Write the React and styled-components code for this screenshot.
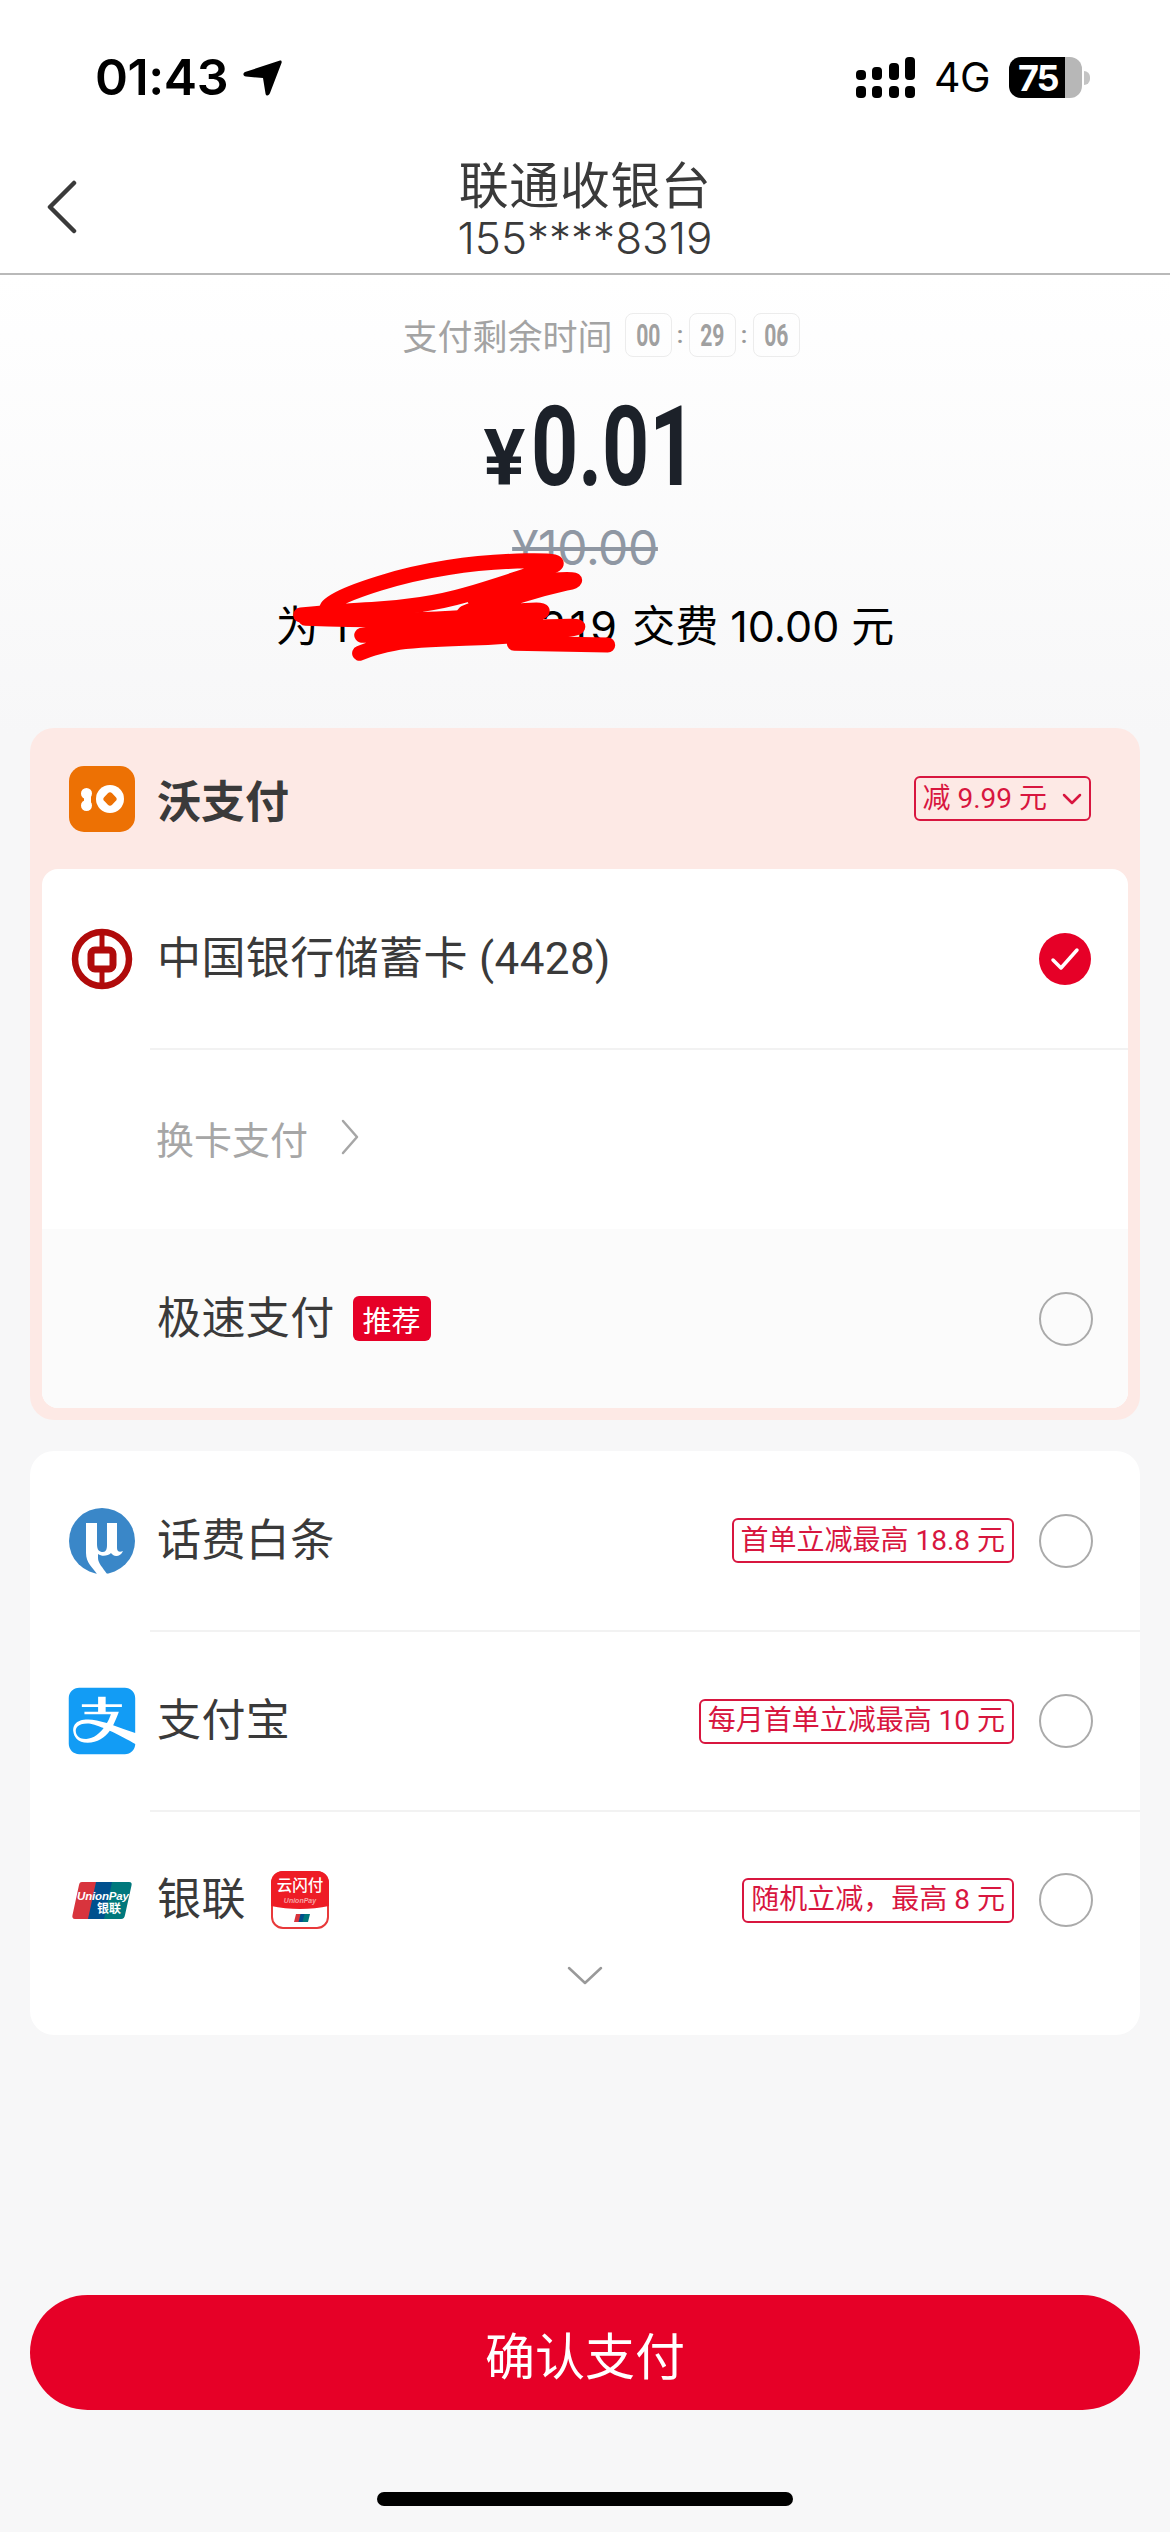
import React from "react";
import styled, { createGlobalStyle } from "styled-components";
import { FaAlipay } from "react-icons/fa";

const Global = createGlobalStyle`
  html, body { margin: 0; padding: 0; background: #f7f7f8; }
  * { box-sizing: border-box; }
`;
const FONT = `Roboto, "Noto Sans CJK SC", sans-serif`;
const UI = `Inter, "Noto Sans CJK SC", sans-serif`;
const RED = "#e60027";
const TAG = "#d8163f";

const Page = styled.div`
  width: 1170px; height: 2532px; overflow: hidden; display: flex; flex-direction: column; position: relative;
  font-family: ${FONT}; background: #f7f7f8; color: #3a3a3a;
`;
const StatusBar = styled.div`
  height: 140px; background: #fff; display: flex; justify-content: space-between; align-items: flex-start;
  padding: 57px 80px 0 95px; color: #000; font-family: ${UI};
`;
const TimeGroup = styled.div`display: flex; align-items: center; gap: 15px; height: 41px;`;
const Clock = styled.span`font-size: 50px; font-weight: 600; line-height: 41px; letter-spacing: -.4px;`;
const StatusRight = styled.div`display: flex; align-items: center; height: 41px;`;
const Network = styled.span`font-size: 41px; font-weight: 400; margin: 0 19px 0 19px; line-height: 41px; letter-spacing: -.5px;`;
const Battery = styled.div`
  width: 73px; height: 41px; border-radius: 12px; background: linear-gradient(90deg, #000 0 56px, #b7b7b7 56px);
  display: flex; align-items: center; padding-left: 9px; color: #fff; font-size: 36px; font-weight: 700; letter-spacing: -2px;
`;
const BatteryNub = styled.i`width: 6px; height: 14px; background: #c4c4c4; border-radius: 0 7px 7px 0; margin-left: 2px;`;

const NavBar = styled.div`
  height: 135px; background: #fff; border-bottom: 2px solid #b9b9b9; display: flex; flex-direction: column;
  align-items: center; position: relative; padding-top: 16px; color: #3a3a3a;
`;
const BackIcon = styled.svg`position: absolute; left: 46px; top: 40px;`;
const NavTitle = styled.div`font-size: 50px; line-height: 62px; letter-spacing: .5px;`;
const NavSub = styled.div`font-size: 44px; line-height: 50px; font-weight: 300; font-family: ${UI}; margin-top: -5px;`;

const Main = styled.main`
  flex: 1; display: flex; flex-direction: column; position: relative;
  background: linear-gradient(180deg, #fff 0, #f7f7f8 460px);
  padding: 0 30px 122px;
`;
const TimerRow = styled.div`
  display: flex; justify-content: center; align-items: center; margin-top: 38px; height: 44px; color: #a3a3a3; font-size: 35px; padding-left: 32px;
`;
const TimerLabel = styled.span`margin: 0 12px 2px 0;`;
const TimerBox = styled.span`
  width: 47px; height: 44px; border: 1px solid #ececec; border-radius: 8px; display: flex; align-items: center; justify-content: center;
`;
const TimerDigits = styled.span`
  display: inline-block; font: 700 32px Roboto, sans-serif; transform: scaleX(.66); color: #a0a0a0;
`;
const TimerColon = styled.span`width: 17px; text-align: center; font-size: 24px; color: #999; font-weight: 600;`;

const AmountRow = styled.div`
  display: flex; justify-content: center; align-items: baseline; height: 100px; margin-top: 40px; color: #1c2129;
`;
const Yen = styled.span`font: 700 78px Roboto, sans-serif; margin-right: 6px;`;
const AmountValue = styled.span`
  display: inline-block; width: 155px; font: 700 112px/100px Roboto, sans-serif; transform: scaleX(.735); transform-origin: left center; white-space: nowrap;
`;
const OldPrice = styled.div`
  height: 50px; margin-top: 26px; text-align: center; font-size: 48px; line-height: 50px; color: #8f97a3; font-weight: 400;
  text-decoration: line-through; text-decoration-thickness: 4px; font-family: Inter, sans-serif; letter-spacing: -.4px;
`;
const Description = styled.div`
  height: 50px; margin-top: 28px; display: flex; justify-content: center; align-items: center; gap: 12px; color: #000; font-size: 43px; line-height: 50px; white-space: nowrap; font-family: ${UI};
`;
const MaskedPhone = styled.span`letter-spacing: 3.3px;`;
const Scribble = styled.svg`position: absolute; left: 0; top: 0; pointer-events: none;`;

const WoCard = styled.section`
  margin-top: 77px; height: 692px; background: #fde9e5; border-radius: 24px; padding: 0 12px 12px; display: flex; flex-direction: column;
`;
const WoHeader = styled.header`
  height: 141px; flex: none; display: flex; align-items: center; padding: 0 37px 0 27px;
`;
const WoTitle = styled.h2`margin: 0 0 0 22px; font-size: 44px; font-weight: 700; color: #3a3a3a; flex: 1;`;
const Inner = styled.div`flex: 1; background: #fff; border-radius: 16px; overflow: hidden; display: flex; flex-direction: column;`;
const Row = styled.div`
  height: ${p => p.$h || 179}px; flex: none; display: flex; align-items: center;
  padding: 0 ${p => p.$right}px 0 ${p => p.$left}px; background: ${p => p.$tint ? "#fbfbfb" : "transparent"};
`;
const IconSlot = styled.div`width: 66px; flex: none; display: flex; justify-content: center; align-items: center; margin-right: 22px;`;
const Label = styled.span`font-size: 44px; line-height: 56px; color: #3a3a3a; white-space: nowrap; letter-spacing: .4px;`;
const Spacer = styled.div`flex: 1;`;
const Divider = styled.div`height: 2px; flex: none; background: #f2f2f2; margin-left: ${p => p.$left}px;`;
const SwitchLink = styled.div`
  height: 179px; flex: none; display: flex; align-items: center; padding: 0 0 5px 114px; gap: 33px; font-size: 38px; color: #a6a6a6;
`;
const RecommendTag = styled.span`
  margin-left: 18px; width: 78px; height: 45px; border-radius: 6px; background: ${RED}; color: #fff; font-size: 29px;
  display: flex; align-items: center; justify-content: center;
`;
const OfferTag = styled.span`
  height: 45px; border: 2px solid ${TAG}; border-radius: 6px; color: ${TAG}; font-size: 28px; line-height: 40px; padding: 0 7px; white-space: nowrap;
  display: inline-flex; align-items: center; gap: ${p => p.$gap || 0}px;
`;
const Radio = styled.span`
  width: 54px; height: 54px; flex: none; border-radius: 50%; border: 2px solid #aaa; margin-left: 25px;
`;
const Checked = styled.span`
  width: 52px; height: 52px; flex: none; border-radius: 50%; background: ${RED}; display: flex; align-items: center; justify-content: center;
`;
const MethodCard = styled.section`
  margin-top: 31px; height: 584px; background: #fff; border-radius: 24px; overflow: hidden; display: flex; flex-direction: column;
`;
const Expand = styled.div`
  height: 75px; margin-top: -26px; flex: none; display: flex; justify-content: center; padding-top: 4px;
`;
const ConfirmButton = styled.button`
  margin-top: auto; height: 115px; border: 0; border-radius: 58px; background: ${RED}; color: #fff; font: 400 50px ${FONT}; flex: none; width: 100%;
`;
const HomeBar = styled.div`
  width: 416px; height: 14px; border-radius: 7px; background: #000; position: absolute; bottom: 26px; left: 377px;
`;
const CloudWrap = styled.span`display: flex; margin-left: 25px;`;
const AlipaySlot = styled.span`display: flex; width: 66px; height: 66px; align-items: center; justify-content: center;`;
const AlipayLogo = styled(FaAlipay)`display: block; flex: none; color: #129cf5; width: 76px; height: 76px;`;

const Arrow = () => (
  <svg width="39" height="37" viewBox="0 0 39 37"><path d="M37 1.500 C38.500 1 39 2.500 38.500 4 L27 34 C26 37 23 37.500 22.500 34.500 L20 19 L3 17.500 C0 17 -.5 14.500 2 13 Z" fill="#000" /></svg>
);
const Signal = () => (
  <svg width="59" height="41" viewBox="0 0 59 41" fill="#000">
    <rect x="0" y="13" width="10" height="10" rx="4" /><rect x="0" y="29" width="10" height="12" rx="4" />
    <rect x="16" y="10" width="10" height="13" rx="4" /><rect x="16" y="29" width="10" height="12" rx="4" />
    <rect x="33" y="6" width="10" height="17" rx="4" /><rect x="33" y="29" width="10" height="12" rx="4" />
    <rect x="49" y="0" width="10" height="23" rx="4" /><rect x="49" y="29" width="10" height="12" rx="4" />
  </svg>
);
const WoLogo = () => (
  <svg width="66" height="66" viewBox="0 0 66 66">
    <rect width="66" height="66" rx="15" fill="#ed7104" />
    <circle cx="41" cy="33" r="14" fill="#fff" />
    <rect x="35.500" y="27.500" width="11" height="11" rx="3" transform="rotate(45 41 33)" fill="#ed7104" />
    <circle cx="17.500" cy="27.500" r="5.500" fill="#fff" /><circle cx="17.500" cy="39.500" r="5.500" fill="#fff" />
    <rect x="15" y="28" width="7" height="11" fill="#fff" />
  </svg>
);
const BocLogo = () => (
  <svg width="62" height="62" viewBox="0 0 62 62" fill="none" stroke="#b00b0b">
    <circle cx="31" cy="31" r="27" strokeWidth="6.500" />
    <rect x="20" y="22" width="22" height="19" rx="4" strokeWidth="7" />
    <path d="M31 4V22M31 41V58" strokeWidth="5" />
  </svg>
);
const MuLogo = () => (
  <svg width="66" height="66" viewBox="0 0 66 66">
    <circle cx="33" cy="33" r="33" fill="#3a87c8" />
    <path d="M17 15H28V36C28 42 30 44 34 44C37 44 38 41 38 37V15H48V40C48 43 50 45 54 43C52 48 47 49 44 47C43 46 42 45 42 45C39 48 33 49 29 46V50C29 55 34 60 38 66H28C24 60 17 55 17 45Z" fill="#fff" />
  </svg>
);
const UnionLogo = () => (
  <svg width="60" height="37" viewBox="0 0 60 37">
    <path d="M10 0H30L22 37H3C0.500 37 0 35 .5 33L7 3C7.500 1 8 0 10 0Z" fill="#d8343d" />
    <path d="M24 0H46L38 37H16Z" fill="#00508e" />
    <path d="M40 0H57C59.500 0 60 1.500 59.500 3.500L53 33C52.500 35.500 51.500 37 49 37H32Z" fill="#00787c" />
    <text x="5" y="18" fontFamily="Liberation Sans" fontStyle="italic" fontWeight="700" fontSize="11.500" fill="#fff" textLength="52">UnionPay</text>
    <text x="25" y="31" fontFamily="Noto Sans CJK SC" fontWeight="700" fontSize="12" fill="#fff">银联</text>
  </svg>
);
const CloudLogo = () => (
  <svg width="58" height="58" viewBox="0 0 58 58">
    <rect x="1" y="1" width="56" height="56" rx="11" fill="#fff" stroke="#e8393a" strokeWidth="2" />
    <path d="M12 0H46C53 0 58 5 58 12V35C40 39 18 39 0 35V12C0 5 5 0 12 0Z" fill="#ee1c25" />
    <text x="29" y="20" textAnchor="middle" fontFamily="Noto Sans CJK SC" fontWeight="500" fontSize="15.500" fill="#fff">云闪付</text>
    <text x="29" y="32" textAnchor="middle" fontFamily="Liberation Sans" fontStyle="italic" fontWeight="700" fontSize="7" fill="#f6a5a5">UnionPay</text>
    <path d="M25 43H31L29 51H23Z" fill="#d8343d" /><path d="M29.500 43H35L33 51H27.500Z" fill="#00508e" /><path d="M33.500 43H39L37 51H31.500Z" fill="#00787c" />
  </svg>
);
const Chevron = ({ w, h, color, sw, d }) => (
  <svg width={w} height={h} viewBox={`0 0 ${w} ${h}`} fill="none" stroke={color} strokeWidth={sw} strokeLinecap="round" strokeLinejoin="round"><path d={d} /></svg>
);
const Check = () => (
  <svg width="30" height="24" viewBox="0 0 30 24" fill="none" stroke="#fff" strokeWidth="3.500" strokeLinecap="round" strokeLinejoin="round"><path d="M3 13L11 21L27 3" /></svg>
);

/* the pen strokes, read off the reference crop (crop px -> page px) */
const strokes = [
  [[205,765],[300,752],[400,745],[500,722],[580,688],[680,640],[750,600],[580,605],[430,640],[300,700],[250,745],[275,755]],
  [[560,720],[650,665],[790,655],[700,685],[610,725],[500,775],[735,740],[620,790],[270,830],[450,820],[830,790],[650,830],[430,840],[360,860],[325,880]],
  [[215,775],[400,785],[620,765]],
  [[640,850],[830,855]],
];
const toPage = ([x, y]) => [200 + x / 2.036, 85 + y / 3];
const smooth = pts => {
  const p = pts.map(toPage);
  let d = `M${p[0][0].toFixed(1)} ${p[0][1].toFixed(1)}`;
  for (let i = 1; i < p.length - 1; i++) {
    const mx = (p[i][0] + p[i + 1][0]) / 2, my = (p[i][1] + p[i + 1][1]) / 2;
    d += `Q${p[i][0].toFixed(1)} ${p[i][1].toFixed(1)} ${mx.toFixed(1)} ${my.toFixed(1)}`;
  }
  const l = p[p.length - 1];
  return d + `L${l[0].toFixed(1)} ${l[1].toFixed(1)}`;
};

export default function App() {
  return (
    <Page>
      <Global />
      <StatusBar>
        <TimeGroup><Clock>01:43</Clock><Arrow /></TimeGroup>
        <StatusRight>
          <Signal /><Network>4G</Network>
          <Battery>75</Battery><BatteryNub />
        </StatusRight>
      </StatusBar>
      <NavBar>
        <BackIcon width="32" height="54" viewBox="0 0 32 54" fill="none" stroke="#3a3a3a" strokeWidth="4.500" strokeLinecap="round" strokeLinejoin="round"><path d="M28 3L4 27L28 51" /></BackIcon>
        <NavTitle>联通收银台</NavTitle>
        <NavSub>155****8319</NavSub>
      </NavBar>
      <Main>
        <TimerRow>
          <TimerLabel>支付剩余时间</TimerLabel>
          <TimerBox><TimerDigits>00</TimerDigits></TimerBox>
          <TimerColon>:</TimerColon>
          <TimerBox><TimerDigits>29</TimerDigits></TimerBox>
          <TimerColon>:</TimerColon>
          <TimerBox><TimerDigits>06</TimerDigits></TimerBox>
        </TimerRow>
        <AmountRow><Yen>¥</Yen><AmountValue>0.01</AmountValue></AmountRow>
        <OldPrice>¥10.00</OldPrice>
        <Description><span>为</span><MaskedPhone>155****8319</MaskedPhone><span>交费</span><span>10.00</span><span>元</span></Description>
        <Scribble width="1170" height="460" viewBox="0 0 1170 460" fill="none" stroke="#ff0000" strokeWidth="15" strokeLinecap="round" strokeLinejoin="round">
          {strokes.map((s, i) => <path key={i} d={smooth(s)} />)}
        </Scribble>

        <WoCard>
          <WoHeader>
            <WoLogo />
            <WoTitle>沃支付</WoTitle>
            <OfferTag $gap={15}>减 9.99 元<Chevron w={20} h={12} color={TAG} sw={2.5} d="M2 2L10 10L18 2" /></OfferTag>
          </WoHeader>
          <Inner>
            <Row $left={27} $right={37}>
              <IconSlot><BocLogo /></IconSlot>
              <Label>中国银行储蓄卡 (4428)</Label>
              <Spacer />
              <Checked><Check /></Checked>
            </Row>
            <Divider $left={108} />
            <SwitchLink>换卡支付<Chevron w={18} h={36} color="#a6a6a6" sw={2.5} d="M2 2L16 18L2 34" /></SwitchLink>
            <Row $left={27} $right={35} $tint>
              <IconSlot />
              <Label>极速支付</Label>
              <RecommendTag>推荐</RecommendTag>
              <Spacer />
              <Radio />
            </Row>
          </Inner>
        </WoCard>

        <MethodCard>
          <Row $left={39} $right={47}>
            <IconSlot><MuLogo /></IconSlot>
            <Label>话费白条</Label>
            <Spacer />
            <OfferTag>首单立减最高 18.8 元</OfferTag>
            <Radio />
          </Row>
          <Divider $left={120} />
          <Row $left={39} $right={47} $h={178}>
            <IconSlot><AlipaySlot><AlipayLogo /></AlipaySlot></IconSlot>
            <Label>支付宝</Label>
            <Spacer />
            <OfferTag>每月首单立减最高 10 元</OfferTag>
            <Radio />
          </Row>
          <Divider $left={120} />
          <Row $left={39} $right={47} $h={176}>
            <IconSlot><UnionLogo /></IconSlot>
            <Label>银联</Label>
            <CloudWrap><CloudLogo /></CloudWrap>
            <Spacer />
            <OfferTag>随机立减，最高 8 元</OfferTag>
            <Radio />
          </Row>
          <Expand><Chevron w={36} h={20} color="#999" sw={2.5} d="M2 2L18 17L34 2" /></Expand>
        </MethodCard>

        <ConfirmButton>确认支付</ConfirmButton>
      </Main>
      <HomeBar />
    </Page>
  );
}
